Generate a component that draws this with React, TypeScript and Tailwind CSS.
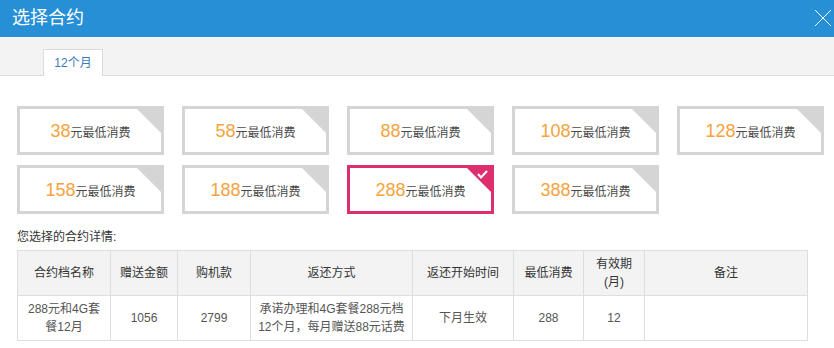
const plans = [
  [38, 58, 88, 108, 128],
  [158, 188, 288, 388],
];
const selected = 288;

function PlanCard({ amount }: { amount: number }) {
  const active = amount === selected;
  return (
    <div
      className={`relative flex h-[49px] w-[147px] items-center justify-center overflow-hidden border-[3px] bg-white ${
        active ? "border-[#dd2f6d]" : "border-[#d5d5d5]"
      }`}
    >
      <span className="pt-[2px]">
        <span className="text-[18px] text-[#f5a33c]">{amount}</span>
        <span className="text-[12px] text-[#4a4a4a]">元最低消费</span>
      </span>
      <svg className="absolute right-0 top-0" width="24" height="24" viewBox="0 0 24 24">
        <polygon points="0,0 24,0 24,24" fill={active ? "#dd2f6d" : "#d5d5d5"} />
        {active && (
          <polyline points="11,6 14,9.5 20,3" fill="none" stroke="#fff" strokeWidth="2" />
        )}
      </svg>
    </div>
  );
}

const heads = ["合约档名称", "赠送金额", "购机款", "返还方式", "返还开始时间", "最低消费", "有效期\n(月)", "备注"];
const widths = ["w-[93px]", "w-[67px]", "w-[73px]", "w-[162px]", "w-[101px]", "w-[70px]", "w-[61px]", "w-[163px]"];
const row = ["288元和4G套\n餐12月", "1056", "2799", "承诺办理和4G套餐288元档\n12个月，每月赠送88元话费", "下月生效", "288", "12", ""];

export default function App() {
  return (
    <div
      className="h-[348px] w-[834px] overflow-hidden bg-white"
      style={{ fontFamily: '"Liberation Sans", "Noto Sans CJK SC", sans-serif' }}
    >
      <div className="flex h-[37px] items-center justify-between bg-[#268fd5] pl-[12px] pr-[2px]">
        <span className="text-[18px] text-white">选择合约</span>
        <svg width="18" height="18" viewBox="0 0 18 18" className="mb-[2px]">
          <path d="M1 1L17 17M17 1L1 17" stroke="#fff" strokeWidth="1" />
        </svg>
      </div>
      <div className="flex h-[39px] items-end border-b border-[#dcdcdc] bg-[#f3f3f3] pl-[43px]">
        <div className="-mb-px flex h-[27px] w-[60px] items-center justify-center border border-b-0 border-[#dcdcdc] bg-white text-[12px] text-[#3b7ab8]">
          12个月
        </div>
      </div>
      <div className="flex flex-col gap-[10px] pl-[17px] pt-[30px]">
        {plans.map((r, i) => (
          <div key={i} className="flex gap-[18px]">
            {r.map((a) => (
              <PlanCard key={a} amount={a} />
            ))}
          </div>
        ))}
      </div>
      <div className="pl-[17px] pt-[14px] text-[12px] text-[#333]">您选择的合约详情:</div>
      <table className="ml-[17px] mt-[4px] border-collapse text-[12px]">
        <thead>
          <tr className="h-[45px] bg-[#f3f3f3] text-[#333]">
            {heads.map((h, i) => (
              <th key={i} className={`${widths[i]} whitespace-pre-line border border-[#dedede] p-0 font-normal leading-[18px]`}>
                {h}
              </th>
            ))}
          </tr>
        </thead>
        <tbody>
          <tr className="h-[45px] text-[#555]">
            {row.map((c, i) => (
              <td key={i} className="whitespace-pre-line border border-[#dedede] p-0 text-center leading-[18px]">
                {c}
              </td>
            ))}
          </tr>
        </tbody>
      </table>
    </div>
  );
}
